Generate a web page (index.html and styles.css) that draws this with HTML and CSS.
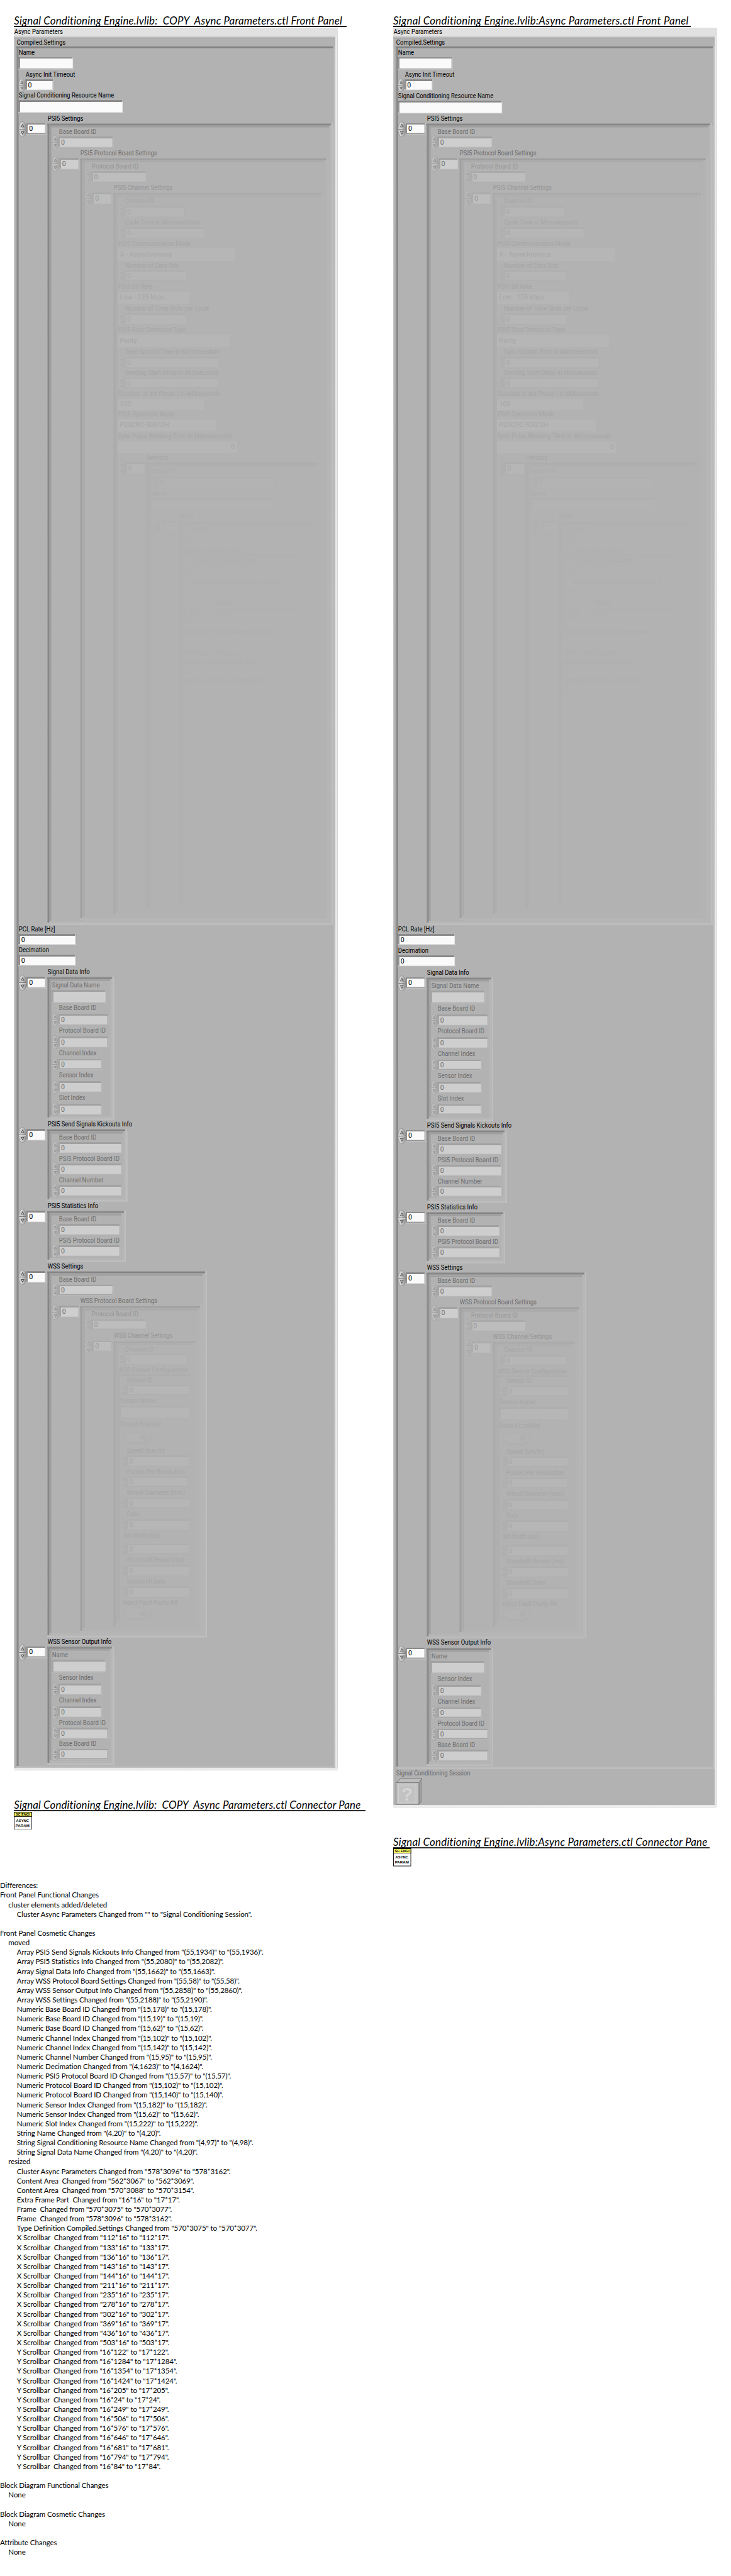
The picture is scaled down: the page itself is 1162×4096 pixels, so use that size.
FILE: index.html
```html
<!DOCTYPE html>
<html lang="en">
<head>
<meta charset="utf-8">
<title>Async Parameters differences</title>
<link rel="stylesheet" href="styles.css">
</head>
<body>
<template id="compiled-settings">
<div class="label">Compiled.Settings</div>
<div class="cluster bevel compiled">
  <div class="str h40"><div class="label">Name</div><div class="field w99"></div></div>
  <div class="num h37"><div class="label">Async Init Timeout</div><div class="field w52">0</div></div>
  <div class="str h41 resource"><div class="label">Signal Conditioning Resource Name</div><div class="field w188"></div></div>

  <div class="array"><div class="label">PSI5 Settings</div><div class="row"><div class="index"><div class="field">0</div></div>
  <div class="frame bevel psi-1"><div class="element bevel">
    <div class="num"><div class="label">Base Board ID</div><div class="field w100">0</div></div>
    <div class="array"><div class="label">PSI5 Protocol Board Settings</div><div class="row"><div class="index"><div class="field">0</div></div>
    <div class="frame bevel psi-2"><div class="element bevel">
      <div class="num"><div class="label">Protocol Board ID</div><div class="field w100">0</div></div>
      <div class="array"><div class="label">PSI5 Channel Settings</div><div class="row"><div class="index"><div class="field">0</div></div>
      <div class="frame bevel psi-3"><div class="element bevel">
        <div class="num"><div class="label">Channel ID</div><div class="field w111">0</div></div>
        <div class="num"><div class="label">Cycle Time in Microseconds</div><div class="field w146">0</div></div>
        <div class="enum"><div class="label">PSI5 Communication Mode</div><div class="field w210">A - Asynchronous</div></div>
        <div class="num"><div class="label">Number of Data Bits</div><div class="field w114">0</div></div>
        <div class="enum"><div class="label">PSI5 Bit Rate</div><div class="field w128">Low - 125 kbps</div></div>
        <div class="num"><div class="label">Number of Time Slots per Cycle</div><div class="field w114">0</div></div>
        <div class="enum"><div class="label">PSI5 Error Detection Type</div><div class="field w200">Parity</div></div>
        <div class="num"><div class="label">Sync Sustain Time in Microseconds</div><div class="field w171">0</div></div>
        <div class="num"><div class="label">Sending Start Delay In Milliseconds</div><div class="field w171">0</div></div>
        <div class="enum h36"><div class="label">Duration of Init Phase I In Milliseconds</div><div class="field w154 short">100</div></div>
        <div class="enum"><div class="label">PSI5 Operation Mode</div><div class="field w177">P20CRC-500/2H</div></div>
        <div class="enum h38"><div class="label">Sync Pulse Blocking Time In Microseconds</div><div class="field w213 short end">0</div></div>
        <div class="array"><div class="label">Sensors</div><div class="row"><div class="index"><div class="field">0</div></div>
        <div class="frame bevel psi-4"><div class="element bevel">
          <div class="num h40 wide flush"><div class="label">Sensor ID</div><div class="field w210">0</div></div>
          <div class="str h41"><div class="label">Name</div><div class="field w222"></div></div>
          <div class="array"><div class="label">Slots</div><div class="row"><div class="index"><div class="field">0</div></div>
          <div class="frame bevel psi-5"><div class="element bevel">
            <div class="num"><div class="label">Slot ID</div><div class="field w210">0</div></div>
            <div class="label">Init Data Configuration</div>
            <div class="cluster bevel init-data">
              <div class="num"><div class="label">Number of Data Nibbles</div><div class="field w183">0</div></div>
              <div class="num"><div class="label">Data Message Repetition Count K</div><div class="field w183">0</div></div>
              <div class="array values"><div class="label">Values</div><div class="row"><div class="index"><div class="field">0</div></div>
              <div class="frame bevel psi-6"><div class="num bare"><div class="field w128">0</div></div></div></div></div>
            </div>
            <div class="enum h38"><div class="label">Slot Start Time in Microseconds</div><div class="field w226 short end">0</div></div>
            <div class="label">PSI5 Frame Structure</div>
            <div class="enum h34"><div class="label">Number of Messaging Bits</div><div class="field w200 tiny">0</div></div>
            <div class="enum h34"><div class="label">Number of Frame Control Bits</div><div class="field w200 tiny">0</div></div>
          </div></div></div></div>
        </div></div></div></div>
      </div></div></div></div>
    </div></div></div></div>
  </div></div></div></div>

  <div class="plain h37 pcl"><div class="label">PCL Rate [Hz]</div><div class="field w104">0</div></div>
  <div class="plain h39"><div class="label">Decimation</div><div class="field w104">0</div></div>

  <div class="array"><div class="label">Signal Data Info</div><div class="row"><div class="index"><div class="field">0</div></div>
  <div class="frame bevel signal-data"><div class="element bevel">
    <div class="str h41"><div class="label">Signal Data Name</div><div class="field w99"></div></div>
    <div class="num h40 wide"><div class="label">Base Board ID</div><div class="field w92">0</div></div>
    <div class="num h40 wide"><div class="label">Protocol Board ID</div><div class="field w92">0</div></div>
    <div class="num h40 wide"><div class="label">Channel Index</div><div class="field w80">0</div></div>
    <div class="num h40 wide"><div class="label">Sensor Index</div><div class="field w80">0</div></div>
    <div class="num h40 wide"><div class="label">Slot Index</div><div class="field w80">0</div></div>
  </div></div></div></div>

  <div class="array"><div class="label">PSI5 Send Signals Kickouts Info</div><div class="row"><div class="index"><div class="field">0</div></div>
  <div class="frame bevel kickouts"><div class="element bevel">
    <div class="num"><div class="label">Base Board ID</div><div class="field w116">0</div></div>
    <div class="num"><div class="label">PSI5 Protocol Board ID</div><div class="field w116">0</div></div>
    <div class="num"><div class="label">Channel Number</div><div class="field w116">0</div></div>
  </div></div></div></div>

  <div class="array"><div class="label">PSI5 Statistics Info</div><div class="row"><div class="index"><div class="field">0</div></div>
  <div class="frame bevel statistics"><div class="element bevel">
    <div class="num"><div class="label">Base Board ID</div><div class="field w113">0</div></div>
    <div class="num"><div class="label">PSI5 Protocol Board ID</div><div class="field w113">0</div></div>
  </div></div></div></div>

  <div class="array"><div class="label">WSS Settings</div><div class="row"><div class="index"><div class="field">0</div></div>
  <div class="frame bevel wss-1"><div class="element bevel">
    <div class="num"><div class="label">Base Board ID</div><div class="field w100">0</div></div>
    <div class="array"><div class="label">WSS Protocol Board Settings</div><div class="row"><div class="index"><div class="field">0</div></div>
    <div class="frame bevel wss-2"><div class="element bevel">
      <div class="num"><div class="label">Protocol Board ID</div><div class="field w100">0</div></div>
      <div class="array"><div class="label">WSS Channel Settings</div><div class="row"><div class="index"><div class="field">0</div></div>
      <div class="frame bevel wss-3"><div class="element bevel">
        <div class="num"><div class="label">Channel ID</div><div class="field w114">0</div></div>
        <div class="label">WSS Sensor Configuration</div>
        <div class="cluster bevel sensor-config">
          <div class="num"><div class="label">Sensor ID</div><div class="field w114">0</div></div>
          <div class="str h41"><div class="label">Sensor Name</div><div class="field w126"></div></div>
          <div class="bool h47"><div class="label">Output Enabled</div><div class="button"></div></div>
          <div class="num"><div class="label">Speed (km/hr)</div><div class="field w114">0</div></div>
          <div class="num"><div class="label">Pulses Per Revolution</div><div class="field w111">0</div></div>
          <div class="num"><div class="label">Wheel Diameter (mm)</div><div class="field w114">0</div></div>
          <div class="num"><div class="label">Data</div><div class="field w114">0</div></div>
          <div class="num bit-width"><div class="label">Bit Width (us)</div><div class="field w114">0</div></div>
          <div class="num"><div class="label">Standstill Period (ms)</div><div class="field w114">0</div></div>
          <div class="num"><div class="label">Standstill Data</div><div class="field w114">0</div></div>
          <div class="bool close"><div class="label">Inject Fault Parity Bit</div><div class="button"></div></div>
        </div>
      </div></div></div></div>
    </div></div></div></div>
  </div></div></div></div>

  <div class="array"><div class="label">WSS Sensor Output Info</div><div class="row"><div class="index"><div class="field">0</div></div>
  <div class="frame bevel wss-output"><div class="element bevel">
    <div class="str h41"><div class="label">Name</div><div class="field w99"></div></div>
    <div class="num h40 wide"><div class="label">Sensor Index</div><div class="field w80">0</div></div>
    <div class="num h40 wide"><div class="label">Channel Index</div><div class="field w80">0</div></div>
    <div class="num"><div class="label">Protocol Board ID</div><div class="field w92">0</div></div>
    <div class="num"><div class="label">Base Board ID</div><div class="field w92">0</div></div>
  </div></div></div></div>
</div>
</template>

<main class="compare">
  <section class="version previous">
    <h1 class="t1">Signal Conditioning Engine.lvlib:  COPY  Async Parameters.ctl Front Panel</h1>
    <div class="panel"><div class="strip"><div class="label">Async Parameters</div></div>
      <div class="outer"><div class="slot"></div></div>
    </div>
    <h1 class="t2">Signal Conditioning Engine.lvlib:  COPY  Async Parameters.ctl Connector Pane</h1>
    <svg class="vi" viewBox="0 0 32 32"><rect x=".5" y=".5" width="31" height="31" fill="#fff" stroke="#000"/><rect x=".5" y=".5" width="31" height="8" fill="#ffff66" stroke="#000"/><text x="3" y="7" textLength="26" lengthAdjust="spacingAndGlyphs">SC ENGI</text><text x="4" y="18" textLength="23" lengthAdjust="spacingAndGlyphs">ASYNC</text><text x="3" y="27" textLength="25" lengthAdjust="spacingAndGlyphs">PARAM</text></svg>
  </section>
  <section class="version current">
    <h1 class="t3">Signal Conditioning Engine.lvlib:Async Parameters.ctl Front Panel</h1>
    <div class="panel"><div class="strip"><div class="label">Async Parameters</div></div>
      <div class="outer"><div class="slot"></div>
        <div class="session"><div class="label">Signal Conditioning Session</div>
          <svg class="cube" viewBox="0 0 48 48"><g stroke="#777" stroke-linejoin="round"><path d="M.7 8.5 9.5.7H47.3L41.5 8.5Z" fill="#bdbdbd"/><path d="M41.5 8.5 47.3.7V41L41.5 47.3Z" fill="#a2a2a2"/><path d="M.7 8.5H41.5V47.3H.7Z" fill="#c2c2c2"/></g><rect x="5" y="12.5" width="31" height="31" fill="none" stroke="#d4d4d4"/><text x="20.5" y="40">?</text></svg>
        </div>
      </div>
    </div>
    <h1 class="t4">Signal Conditioning Engine.lvlib:Async Parameters.ctl Connector Pane</h1>
    <svg class="vi" viewBox="0 0 32 32"><rect x=".5" y=".5" width="31" height="31" fill="#fff" stroke="#000"/><rect x=".5" y=".5" width="31" height="8" fill="#ffff66" stroke="#000"/><text x="3" y="7" textLength="26" lengthAdjust="spacingAndGlyphs">SC ENGI</text><text x="4" y="18" textLength="23" lengthAdjust="spacingAndGlyphs">ASYNC</text><text x="3" y="27" textLength="25" lengthAdjust="spacingAndGlyphs">PARAM</text></svg>
  </section>
</main>

<section class="differences">
<pre>Differences:
Front Panel Functional Changes</pre>
<pre class="in1">cluster elements added/deleted</pre>
<pre class="in2">Cluster Async Parameters Changed from "" to "Signal Conditioning Session".</pre>
<pre class="next">Front Panel Cosmetic Changes</pre>
<pre class="in1">moved</pre>
<pre class="in2">Array PSI5 Send Signals Kickouts Info Changed from "(55,1934)" to "(55,1936)".
Array PSI5 Statistics Info Changed from "(55,2080)" to "(55,2082)".
Array Signal Data Info Changed from "(55,1662)" to "(55,1663)".
Array WSS Protocol Board Settings Changed from "(55,58)" to "(55,58)".
Array WSS Sensor Output Info Changed from "(55,2858)" to "(55,2860)".
Array WSS Settings Changed from "(55,2188)" to "(55,2190)".
Numeric Base Board ID Changed from "(15,178)" to "(15,178)".
Numeric Base Board ID Changed from "(15,19)" to "(15,19)".
Numeric Base Board ID Changed from "(15,62)" to "(15,62)".
Numeric Channel Index Changed from "(15,102)" to "(15,102)".
Numeric Channel Index Changed from "(15,142)" to "(15,142)".
Numeric Channel Number Changed from "(15,95)" to "(15,95)".
Numeric Decimation Changed from "(4,1623)" to "(4,1624)".
Numeric PSI5 Protocol Board ID Changed from "(15,57)" to "(15,57)".
Numeric Protocol Board ID Changed from "(15,102)" to "(15,102)".
Numeric Protocol Board ID Changed from "(15,140)" to "(15,140)".
Numeric Sensor Index Changed from "(15,182)" to "(15,182)".
Numeric Sensor Index Changed from "(15,62)" to "(15,62)".
Numeric Slot Index Changed from "(15,222)" to "(15,222)".
String Name Changed from "(4,20)" to "(4,20)".
String Signal Conditioning Resource Name Changed from "(4,97)" to "(4,98)".
String Signal Data Name Changed from "(4,20)" to "(4,20)".</pre>
<pre class="in1">resized</pre>
<pre class="in2">Cluster Async Parameters Changed from "578*3096" to "578*3162".
Content Area  Changed from "562*3067" to "562*3069".
Content Area  Changed from "570*3088" to "570*3154".
Extra Frame Part  Changed from "16*16" to "17*17".
Frame  Changed from "570*3075" to "570*3077".
Frame  Changed from "578*3096" to "578*3162".
Type Definition Compiled.Settings Changed from "570*3075" to "570*3077".
X Scrollbar  Changed from "112*16" to "112*17".
X Scrollbar  Changed from "133*16" to "133*17".
X Scrollbar  Changed from "136*16" to "136*17".
X Scrollbar  Changed from "143*16" to "143*17".
X Scrollbar  Changed from "144*16" to "144*17".
X Scrollbar  Changed from "211*16" to "211*17".
X Scrollbar  Changed from "235*16" to "235*17".
X Scrollbar  Changed from "278*16" to "278*17".
X Scrollbar  Changed from "302*16" to "302*17".
X Scrollbar  Changed from "369*16" to "369*17".
X Scrollbar  Changed from "436*16" to "436*17".
X Scrollbar  Changed from "503*16" to "503*17".
Y Scrollbar  Changed from "16*122" to "17*122".
Y Scrollbar  Changed from "16*1284" to "17*1284".
Y Scrollbar  Changed from "16*1354" to "17*1354".
Y Scrollbar  Changed from "16*1424" to "17*1424".
Y Scrollbar  Changed from "16*205" to "17*205".
Y Scrollbar  Changed from "16*24" to "17*24".
Y Scrollbar  Changed from "16*249" to "17*249".
Y Scrollbar  Changed from "16*506" to "17*506".
Y Scrollbar  Changed from "16*576" to "17*576".
Y Scrollbar  Changed from "16*646" to "17*646".
Y Scrollbar  Changed from "16*681" to "17*681".
Y Scrollbar  Changed from "16*794" to "17*794".
Y Scrollbar  Changed from "16*84" to "17*84".</pre>
<pre class="next">Block Diagram Functional Changes</pre>
<pre class="in1">None</pre>
<pre class="next">Block Diagram Cosmetic Changes</pre>
<pre class="in1">None</pre>
<pre class="next">Attribute Changes</pre>
<pre class="in1">None</pre>
</section>
<script src="panel.js"></script>
</body>
</html>
```
FILE: panel.js
```js
// Both versions share the same Compiled.Settings cluster.
const compiled = document.getElementById("compiled-settings");
for (const slot of document.querySelectorAll(".slot")) {
  slot.append(compiled.content.cloneNode(true));
}
```
FILE: styles.css
```css
/* .1rem is one panel pixel */
* { box-sizing: border-box; }
html { background: #fff; font-size: 8.905px; }
body { margin: 0; color: #000; }

.compare { display: flex; padding: 2.6rem 0 0 2.5rem; height: 335.8rem; }
.version { width: 67.7rem; flex: none; }
.current { width: 60rem; }

h1 {
  margin: 0; height: 2.2rem; overflow: hidden; white-space: pre;
  font: italic 400 1.9rem/2.2rem Lato, sans-serif;
  box-shadow: inset 0 -.2rem #000;
}
.t1 { width: 59.4rem; letter-spacing: .018rem; }
.t2 { width: 62.8rem; letter-spacing: .014rem; margin-top: 5.1rem; }
.t3 { width: 53.1rem; letter-spacing: .028rem; }
.t4 { width: 56.5rem; letter-spacing: .024rem; margin-top: 5.1rem; }
.vi { display: block; width: 3.2rem; height: 3.2rem; margin-top: .1rem; }
.vi text { font: 700 6.5px "Liberation Sans", sans-serif; }

.panel { width: 57.8rem; margin-top: .1rem; }
.label {
  height: 1.6rem; padding-left: .1rem; white-space: nowrap; width: max-content;
  font: 1.2rem/1.6rem Roboto, sans-serif;
  transform: scaleX(.89); transform-origin: 0 50%;
}
.strip { height: 1.6rem; background: #e1e1e1; }

.outer {
  width: 57.8rem; padding: .4rem;
  background:
    linear-gradient(90deg, #e4e4e4, #f0f0f0) right / .4rem 100% no-repeat,
    linear-gradient(#e6e6e6, #efefef) bottom / 100% .4rem no-repeat,
    linear-gradient(#c8c8c8, #a8a8a8) top / 100% .4rem no-repeat,
    linear-gradient(90deg, #cacaca, #a8a8a8) left / .4rem 100% no-repeat,
    #b2b2b2;
}
.bevel {
  padding: .4rem;
  background:
    linear-gradient(90deg, #b6b6b6, #c3c3c3) right / .4rem 100% no-repeat,
    linear-gradient(#b6b6b6, #c3c3c3) bottom / 100% .4rem no-repeat,
    linear-gradient(#a6a6a6, #828282 60%, #828282) top / 100% .4rem no-repeat,
    linear-gradient(90deg, #a6a6a6, #828282 60%, #828282) left / .4rem 100% no-repeat,
    #b2b2b2;
}
.compiled { width: 57rem; height: 307.5rem; margin-top: -.3rem; }
.current .compiled { height: 307.7rem; }

/* array elements are disabled, so each nesting level fades further */
.element { opacity: .4; height: 100%; }
.row { display: flex; }
.array > .label { margin-left: 5.1rem; }
.index { position: relative; width: 5.1rem; flex: none; padding-left: 1.4rem; }
.index .field { width: 3.7rem; height: 2.2rem; }
.frame { flex: none; }

.field {
  height: 2.1rem; padding: .3rem .5rem;
  font: 1.2rem/1.5rem Roboto, sans-serif;
  background:
    linear-gradient(#fafafa, #fafafa) .3rem .3rem / calc(100% - .6rem) calc(100% - .6rem) no-repeat,
    linear-gradient(#bdbdbd, #bdbdbd) right / .3rem 100% no-repeat,
    linear-gradient(#bdbdbd, #bdbdbd) bottom / 100% .3rem no-repeat,
    linear-gradient(#929292, #808080) top / 100% .3rem no-repeat,
    #929292;
}
.str .field { height: 2.4rem; }
.enum .field { height: 2.2rem; padding: .3rem .4rem; background: #f4f4f4; }
.enum .field.short { height: 2rem; padding-top: .2rem; }
.enum .field.tiny { height: 1.7rem; padding-top: .1rem; }
.enum .field.end { text-align: right; margin-top: .1rem; }

.num, .str, .enum, .plain, .bool { position: relative; }
.num { height: 3.8rem; }
.enum { height: 3.9rem; }
.num > .label, .num > .field { margin-left: 1.2rem; }
.num.flush > .label { margin-left: 0; }
.num.wide > .field { margin-top: .2rem; }
.num.bare { height: 2.1rem; }
.num::before, .index::before {
  content: ""; position: absolute; left: 0; top: 1.4rem; width: 1.2rem; height: 2.4rem;
  background: url("data:image/svg+xml,%3Csvg xmlns='http://www.w3.org/2000/svg' viewBox='0 0 12 24' preserveAspectRatio='none'%3E%3Cdefs%3E%3ClinearGradient id='g'%3E%3Cstop stop-color='%23bbb'/%3E%3Cstop offset='.35' stop-color='%23dadada'/%3E%3Cstop offset='1' stop-color='%238a8a8a'/%3E%3C/linearGradient%3E%3C/defs%3E%3Cellipse cx='6' cy='12' rx='5.6' ry='11.6' fill='url(%23g)' stroke='%238c8c8c' stroke-width='.7'/%3E%3Cpath d='M1 12H11' stroke='%23777'/%3E%3Cpath d='M1 13H11' stroke='%23ddd' stroke-width='.7'/%3E%3Cpath d='M4 8.5 6 4.5 8 8.5Z M4 15.5H8L6 19.5Z' fill='%23ccc' stroke='%23555' stroke-width='.9'/%3E%3C/svg%3E") 0 0 / 100% 100% no-repeat;
}
.num.wide::before { top: 1.6rem; }
.num.bare::before { top: -.2rem; }
.index::before { top: -.3rem; width: 1.4rem; height: 2.8rem; }
.num.bit-width { height: 4.4rem; }
.bit-width > .label { margin-left: .6rem; }
.bit-width > .field { margin-top: .6rem; }
.num.bit-width::before { top: 2rem; }

.button {
  width: 4.8rem; height: 2rem; margin: .5rem 0 0 .6rem; border-radius: 50%;
  background: radial-gradient(ellipse .7rem .5rem at 76% 50%, #84a070 80%, transparent), #cdcdcd;
  box-shadow: inset 0 0 0 .1rem #8a8a8a, .1rem .2rem .2rem #999;
}
.bool.close .label { margin-left: .5rem; }
.bool.close .button { margin-top: 0; }

.h34 { height: 3.4rem; } .h36 { height: 3.6rem; } .h37 { height: 3.7rem; } .h38 { height: 3.8rem; }
.h39 { height: 3.9rem; } .h40 { height: 4rem; } .h41 { height: 4.1rem; } .h47 { height: 4.7rem; }

.w52 { width: 5.2rem; } .w80 { width: 8rem; } .w92 { width: 9.2rem; } .w99 { width: 9.9rem; }
.w100 { width: 10rem; } .w104 { width: 10.4rem; } .w111 { width: 11.1rem; } .w113 { width: 11.3rem; }
.w114 { width: 11.4rem; } .w116 { width: 11.6rem; } .w126 { width: 12.6rem; } .w128 { width: 12.8rem; }
.w146 { width: 14.6rem; } .w154 { width: 15.4rem; } .w171 { width: 17.1rem; } .w177 { width: 17.7rem; }
.w183 { width: 18.3rem; } .w188 { width: 18.8rem; } .w200 { width: 20rem; } .w210 { width: 21rem; }
.w213 { width: 21.3rem; } .w222 { width: 22.2rem; } .w226 { width: 22.6rem; }

.psi-1 { width: 51.1rem; height: 143.2rem; }
.psi-2 { width: 44.4rem; height: 136.2rem; }
.psi-3 { width: 37.6rem; height: 129.2rem; }
.psi-4 { width: 31rem; height: 80.2rem; }
.psi-5 { width: 24rem; height: 68.9rem; }
.psi-6 { width: 14.8rem; height: 2.9rem; }
.init-data { width: 20.4rem; height: 13rem; margin: -.3rem 0 .1rem; }
.values { height: 5rem; }
.signal-data { width: 12rem; height: 25.6rem; }
.kickouts { width: 14.4rem; height: 13rem; }
.statistics { width: 14.1rem; height: 9.2rem; }
.wss-1 { width: 28.6rem; height: 65.4rem; }
.wss-2 { width: 21.8rem; height: 58.4rem; }
.wss-3 { width: 15.1rem; height: 51.4rem; }
.sensor-config { width: 13.5rem; height: 44.6rem; margin-top: -.3rem; }
.wss-output { width: 12rem; height: 21.2rem; }

/* the newer version has a few controls nudged by a pixel */
.current .resource { padding-top: .1rem; }
.current .pcl { height: 3.8rem; }
.current .signal-data { height: 25.7rem; }

.session { height: 6.4rem; color: #6b6b6b; }
.cube { display: block; width: 4.8rem; height: 4.8rem; }
.cube text { font: 700 33px "Liberation Sans", sans-serif; fill: #d4d4d4; text-anchor: middle; }

.differences { font: 1.3rem/1.701rem Lato, sans-serif; letter-spacing: -.012rem; }
.differences pre { margin: 0; font: inherit; }
.differences .in1 { padding-left: 1.5rem; }
.differences .in2 { padding-left: 3rem; }
.differences .next { margin-top: 1.7rem; }
```
